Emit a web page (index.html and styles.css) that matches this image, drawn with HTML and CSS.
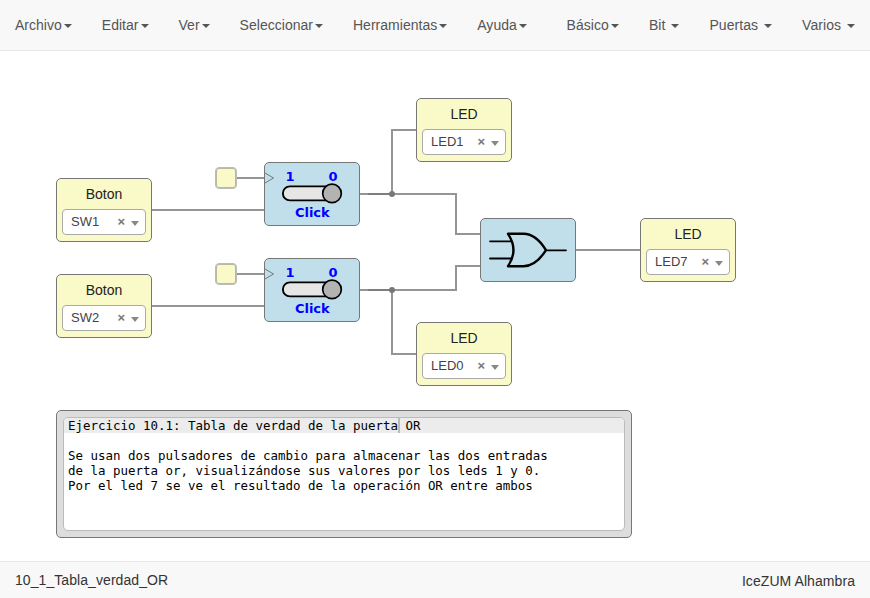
FILE: index.html
```html
<!DOCTYPE html>
<html lang="es">
<head>
<meta charset="utf-8">
<title>10_1_Tabla_verdad_OR</title>
<link rel="stylesheet" href="styles.css">
</head>
<body>
<nav class="navbar">
  <div class="menu">
    <a>Archivo<b class="caret"></b></a><a>Editar<b class="caret"></b></a><a>Ver<b class="caret"></b></a><a>Seleccionar<b class="caret"></b></a><a>Herramientas<b class="caret"></b></a><a>Ayuda<b class="caret"></b></a>
  </div>
  <div class="menu library">
    <a>Básico<b class="caret"></b></a><a>Bit <b class="caret"></b></a><a>Puertas <b class="caret"></b></a><a>Varios <b class="caret"></b></a>
  </div>
</nav>
<main class="canvas">
  <svg class="wires" width="870" height="510" viewBox="0 51 870 510">
    <g class="wire">
      <path d="M152 210H264M152 306H264M236 178H264M236 274H264"/>
      <path d="M360 194H456V234H480M392 194V130H416"/>
      <path d="M360 290H456V266H480M392 290V354H416"/>
      <path d="M576 250H640"/>
    </g>
    <path class="trunk" d="M368 194H392M368 290H392"/>
    <circle class="joint" cx="392" cy="194" r="3"/>
    <circle class="joint" cx="392" cy="290" r="3"/>
  </svg>

  <div class="clock clock-1"></div>
  <div class="clock clock-2"></div>

  <section class="block io sw1"><h2>Boton</h2><div class="select"><span>SW1</span><b class="clear">×</b><i class="arrow"></i></div></section>
  <section class="block io sw2"><h2>Boton</h2><div class="select"><span>SW2</span><b class="clear">×</b><i class="arrow"></i></div></section>
  <section class="block io led1"><h2>LED</h2><div class="select"><span>LED1</span><b class="clear">×</b><i class="arrow"></i></div></section>
  <section class="block io led0"><h2>LED</h2><div class="select"><span>LED0</span><b class="clear">×</b><i class="arrow"></i></div></section>
  <section class="block io led7"><h2>LED</h2><div class="select"><span>LED7</span><b class="clear">×</b><i class="arrow"></i></div></section>

  <section class="block logic click-1">
    <svg width="94" height="62" viewBox="1 1 94 62">
      <path class="clk" d="M1 11L9.5 16L1 21"/>
      <rect class="track" x="18.9" y="24.4" width="54" height="14" rx="7"/>
      <circle class="knob" cx="68" cy="31.4" r="9.3"/>
      <text x="26" y="19">1</text><text x="69" y="19">0</text><text x="48.3" y="55">Click</text>
    </svg>
  </section>
  <section class="block logic click-2">
    <svg width="94" height="62" viewBox="1 1 94 62">
      <path class="clk" d="M1 11L9.5 16L1 21"/>
      <rect class="track" x="18.9" y="24.4" width="54" height="14" rx="7"/>
      <circle class="knob" cx="68" cy="31.4" r="9.3"/>
      <text x="26" y="19">1</text><text x="69" y="19">0</text><text x="48.3" y="55">Click</text>
    </svg>
  </section>
  <section class="block logic gate">
    <svg width="94" height="62" viewBox="1 1 94 62">
      <path class="lead" d="M10 23.3H31M10 40.5H31M67 32.3H86"/>
      <path class="body" d="M28 15.8H43.5C53 15.8 60 22.5 66 32.2C60 41.5 53 48.2 43.5 48.2H28C35.2 37.5 35.2 26.5 28 15.8Z"/>
    </svg>
  </section>

  <section class="block note">
    <div class="editor">
      <div class="line active">Ejercicio 10.1: Tabla de verdad de la puerta<i class="cursor"></i> OR</div>
      <div class="line"></div>
      <div class="line">Se usan dos pulsadores de cambio para almacenar las dos entradas</div>
      <div class="line">de la puerta or, visualizándose sus valores por los leds 1 y 0.</div>
      <div class="line">Por el led 7 se ve el resultado de la operación OR entre ambos</div>
    </div>
  </section>
</main>
<footer class="footer"><span>10_1_Tabla_verdad_OR</span><span class="board">IceZUM Alhambra</span></footer>
</body>
</html>
```
FILE: styles.css
```css
* { box-sizing: border-box; }
body {
  margin: 0;
  height: 598px;
  display: flex;
  flex-direction: column;
  overflow: hidden;
  background: #fff;
  color: #333;
  font: 14px/20px "Liberation Sans", Arial, sans-serif;
}
.navbar {
  height: 51px;
  display: flex;
  justify-content: space-between;
  background: #f8f8f8;
  border-bottom: 1px solid #e7e7e7;
  letter-spacing: 0.02px;
}
.library { letter-spacing: 0.06px; }
.menu { display: flex; }
.menu a { padding: 15px; color: #555; white-space: nowrap; }
.caret {
  display: inline-block;
  margin-left: 2px;
  vertical-align: middle;
  border-top: 4px solid;
  border-left: 4px solid transparent;
  border-right: 4px solid transparent;
}
.canvas { position: relative; flex: 1; }
.wires { display: block; }
.wire path { fill: none; stroke: #959595; stroke-width: 2; }
.trunk { stroke: #777; stroke-width: 1.6; }
.joint { fill: #777; }

.block {
  position: absolute;
  width: 96px;
  height: 64px;
  border: 1px solid #777;
  border-radius: 5px;
}
.io {
  background: #fafac8;
  padding: 5px;
}
.io h2 {
  margin: 0 0 5px;
  font-size: 14px;
  font-weight: normal;
  line-height: 20px;
  text-align: center;
  color: #222;
}
.select {
  height: 26px;
  display: flex;
  align-items: center;
  padding: 0 6px 0 8px;
  border: 1px solid #aaa;
  border-radius: 4px;
  background: #fff;
  color: #444;
  font-size: 13px;
}
.select span { flex: 1; line-height: 24px; }
.clear { color: #777; font-size: 13px; line-height: 24px; margin-right: 6px; }
.arrow {
  margin-top: 3px;
  border-top: 5px solid #888;
  border-left: 4px solid transparent;
  border-right: 4px solid transparent;
}
.sw1 { left: 56px; top: 127px; }
.sw2 { left: 56px; top: 223px; }
.led1 { left: 416px; top: 47px; }
.led0 { left: 416px; top: 271px; }
.led7 { left: 640px; top: 167px; }

.clock {
  position: absolute;
  left: 215px;
  width: 22px;
  height: 22px;
  border: 1px solid #bbb;
  border-radius: 4px;
  background: #fafac8;
  box-shadow: inset 0 0 0 1px #b9b9a0;
}
.clock-1 { top: 116px; }
.clock-2 { top: 212px; }

.logic { background: #c0dfeb; }
.logic svg { display: block; }
.logic text {
  font: bold 13px "DejaVu Sans", sans-serif;
  fill: #00f;
  text-anchor: middle;
}
.click-1 { left: 264px; top: 111px; }
.click-2 { left: 264px; top: 207px; }
.gate { left: 480px; top: 167px; }
.clk { fill: none; stroke: #777; stroke-width: 1; }
.track { fill: #e6e6e6; stroke: #000; stroke-width: 1.9; }
.knob { fill: #b3b3b3; stroke: #000; stroke-width: 1.7; }
.lead { stroke: #000; stroke-width: 1.8; stroke-linecap: round; }
.body { fill: none; stroke: #000; stroke-width: 2.4; stroke-linejoin: round; }

.note {
  left: 56px;
  top: 359px;
  width: 576px;
  height: 128px;
  padding: 6px;
  background: #ddd;
}
.editor {
  height: 114px;
  overflow: hidden;
  border: 1px solid #bbb;
  border-radius: 5px;
  background: #fff;
  color: #000;
  font: 12.46px/15px "DejaVu Sans Mono", monospace;
}
.line { height: 15px; padding-left: 4px; white-space: pre; }
.active { background: #ececec; }
.cursor {
  display: inline-block;
  width: 2px;
  height: 15px;
  margin-right: -2px;
  vertical-align: top;
  background: #bbb;
}
.footer {
  height: 37px;
  display: flex;
  justify-content: space-between;
  padding: 8px 15px;
  background: #f8f8f8;
  border-top: 1px solid #e7e7e7;
  letter-spacing: 0.07px;
}
.board { padding-top: 1px; }
```
